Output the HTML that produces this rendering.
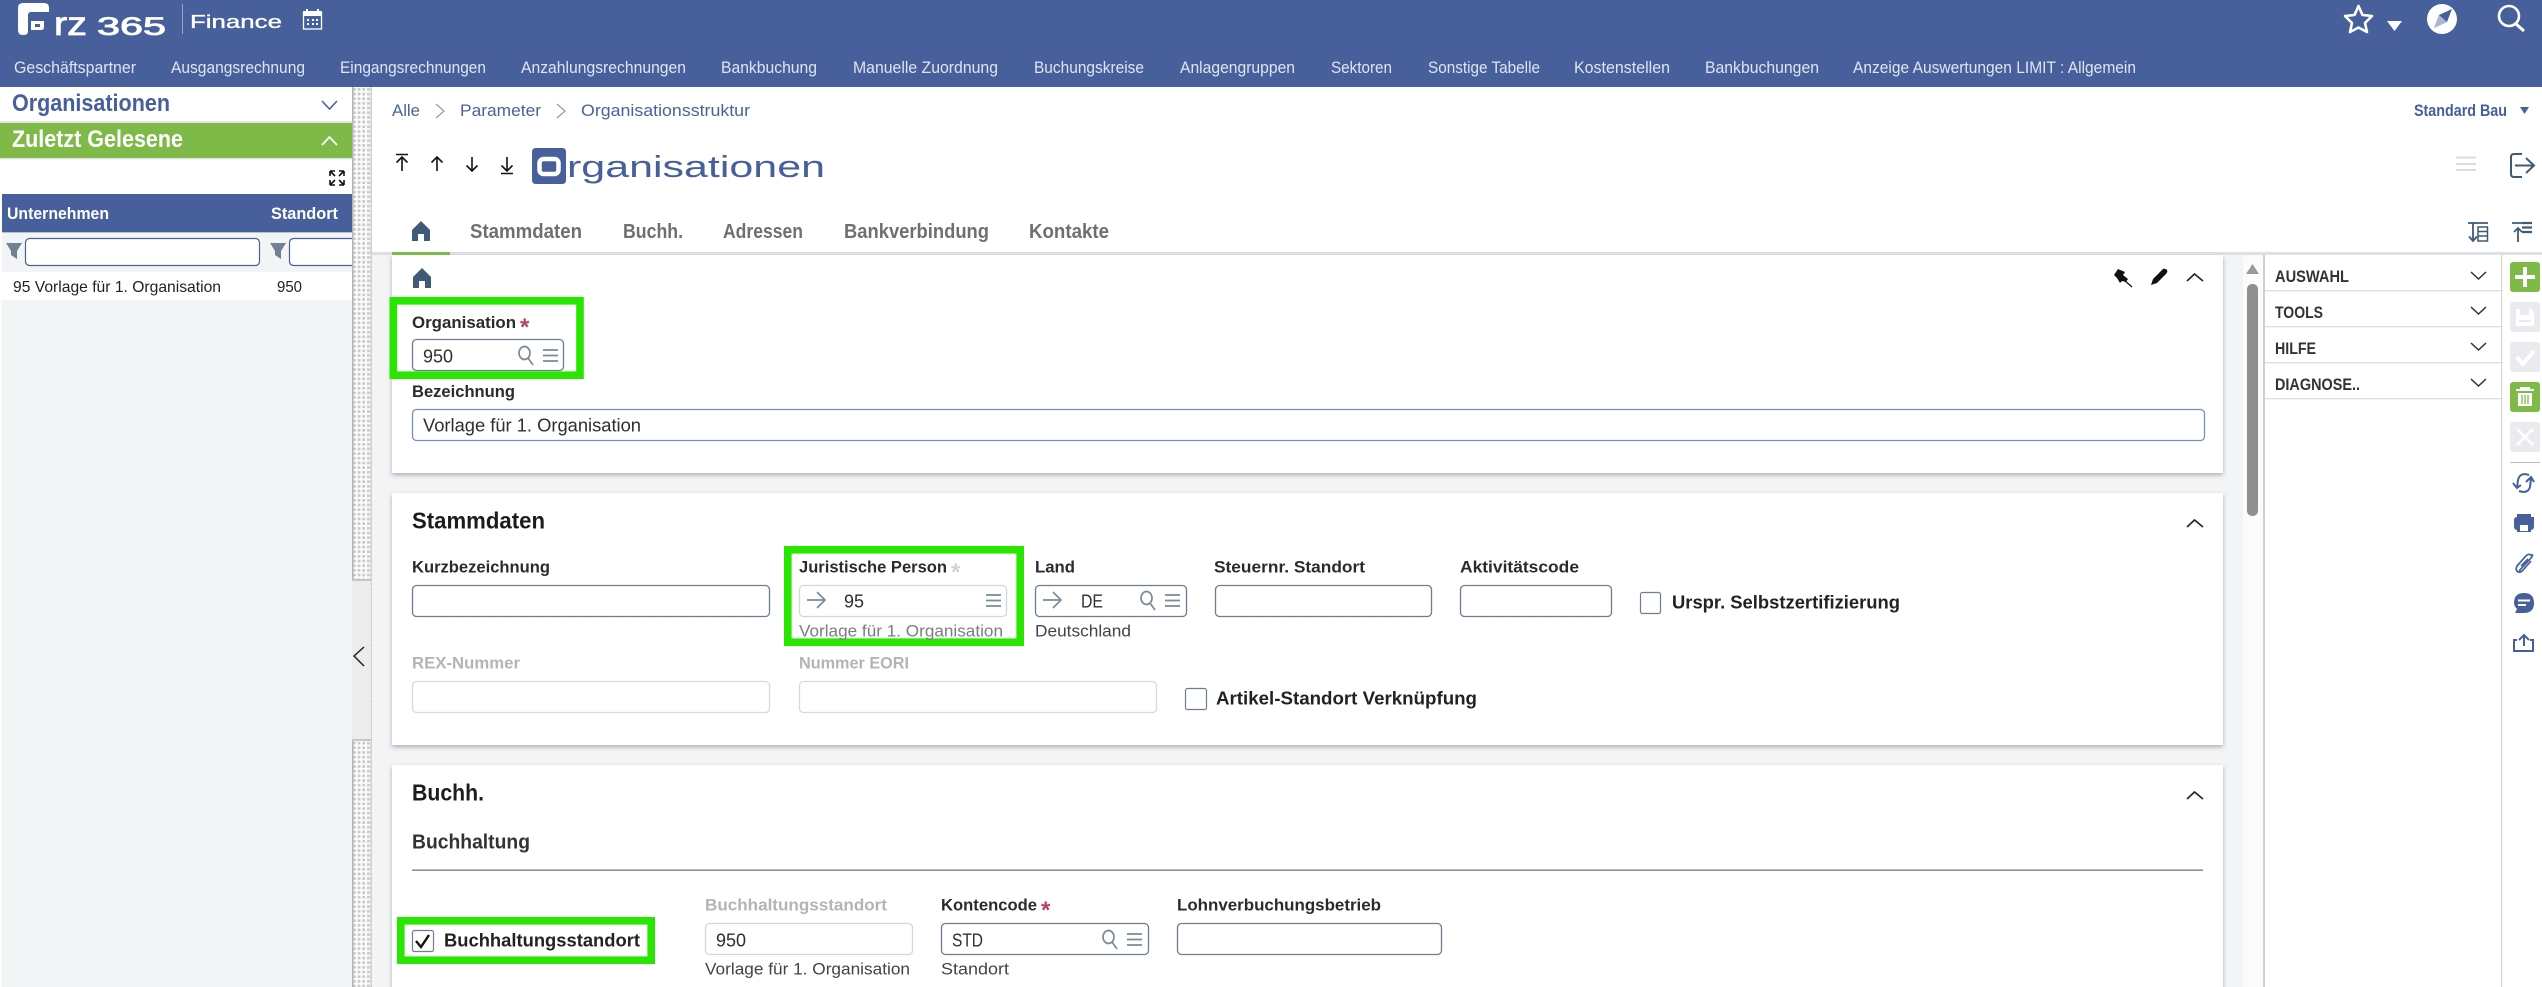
<!DOCTYPE html>
<html lang="de"><head><meta charset="utf-8"><title>Organisationen</title>
<style>
html,body{margin:0;padding:0;background:#fff;width:2542px;height:987px;overflow:hidden}
svg{display:block}
text{font-family:"Liberation Sans",sans-serif;}
.n{font-size:16.5px;fill:#dfe4ef}
.l{font-size:17px;font-weight:700;fill:#2b2b2b}
.g{font-size:17px;font-weight:700;fill:#b4b4b4}
.v{font-size:18px;fill:#2e2e2e}
.s{font-size:17px;fill:#444}
.tab{font-size:20px;font-weight:700;fill:#6f6f6f}
.sb{font-size:16.5px;font-weight:700;fill:#333}
.b{font-size:18.5px;font-weight:700;fill:#222}
.i{fill:#fff;stroke:#6c7f92;stroke-width:1.3}
.d{fill:#fff;stroke:#d6d9dd;stroke-width:1.3}
.ic{fill:none;stroke:#7a8a98;stroke-width:1.6}
</style></head><body>
<svg width="2542" height="987" viewBox="0 0 2542 987" xmlns="http://www.w3.org/2000/svg">
<defs>
<pattern id="dots" x="352" y="87" width="4.67" height="4.67" patternUnits="userSpaceOnUse"><rect width="4.67" height="4.67" fill="#fbfbfb"/><rect x="1" y="1" width="2.7" height="2.7" fill="#c9c9c9"/></pattern>
<filter id="sh" x="-2%" y="-5%" width="104%" height="112%"><feDropShadow dx="0" dy="2" stdDeviation="2.5" flood-color="#6b7680" flood-opacity=".55"/></filter>
<path id="home" d="M9 0 L18 9 V20 H12 V13 H6 V20 H0 V9 Z" fill="#3f5b78"/>
<g id="mag" fill="none" stroke="#7a8a98" stroke-width="1.7"><ellipse cx="6.5" cy="7" rx="5.5" ry="6.500"/><path d="M10 12 L15 19"/></g>
<g id="menu" stroke="#7a8a98" stroke-width="1.7"><path d="M0 1H15M0 6.5H15M0 12H15"/></g>
<g id="arr" fill="none" stroke="#7a8a98" stroke-width="1.7"><path d="M0 9H17M10 1L18 9L10 17"/></g>
<path id="chev" d="M0 0L7.5 7L15 0" fill="none" stroke="#333" stroke-width="1.5"/>
</defs>

<!-- top bar -->
<rect width="2542" height="87" fill="#47609b"/>
<path d="M23 3H44Q49 3 49 8V12H31Q28 12 28 15V31Q28 35 24 35H23Q18 35 18 30V8Q18 3 23 3Z" fill="#fff"/>
<path d="M31 21H44V27Q44 30 41 30H31Z" fill="#fff"/>
<rect x="35" y="24" width="5" height="3" fill="#47609b"/>
<text x="54" y="35" font-size="33" fill="#fff" stroke="#fff" stroke-width=".8" textLength="33" lengthAdjust="spacingAndGlyphs">rz</text>
<text x="97" y="35" font-size="25" fill="#fff" stroke="#fff" stroke-width=".8" textLength="69" lengthAdjust="spacingAndGlyphs">365</text>
<rect x="182" y="4" width="1" height="30" fill="#9aa8c8"/>
<text x="190" y="28" font-size="18.500" fill="#fff" stroke="#fff" stroke-width=".35" textLength="92" lengthAdjust="spacingAndGlyphs">Finance</text>
<g fill="none" stroke="#fff"><rect x="303.500" y="12.500" width="18" height="16.500" stroke-width="1.300"/></g>
<rect x="303" y="11" width="19" height="5" fill="#fff"/>
<path d="M307 9v4M318 9v4" stroke="#fff" stroke-width="2"/>
<path d="M307 20h2M312 20h2M316 20h2M307 24h2M312 24h2M316 24h2" stroke="#fff" stroke-width="2"/>

<g class="n">
<text x="14" y="73" textLength="122" lengthAdjust="spacingAndGlyphs">Geschäftspartner</text>
<text x="171" y="73" textLength="134" lengthAdjust="spacingAndGlyphs">Ausgangsrechnung</text>
<text x="340" y="73" textLength="146" lengthAdjust="spacingAndGlyphs">Eingangsrechnungen</text>
<text x="521" y="73" textLength="165" lengthAdjust="spacingAndGlyphs">Anzahlungsrechnungen</text>
<text x="721" y="73" textLength="96" lengthAdjust="spacingAndGlyphs">Bankbuchung</text>
<text x="853" y="73" textLength="145" lengthAdjust="spacingAndGlyphs">Manuelle Zuordnung</text>
<text x="1034" y="73" textLength="110" lengthAdjust="spacingAndGlyphs">Buchungskreise</text>
<text x="1180" y="73" textLength="115" lengthAdjust="spacingAndGlyphs">Anlagengruppen</text>
<text x="1331" y="73" textLength="61" lengthAdjust="spacingAndGlyphs">Sektoren</text>
<text x="1428" y="73" textLength="112" lengthAdjust="spacingAndGlyphs">Sonstige Tabelle</text>
<text x="1574" y="73" textLength="96" lengthAdjust="spacingAndGlyphs">Kostenstellen</text>
<text x="1705" y="73" textLength="114" lengthAdjust="spacingAndGlyphs">Bankbuchungen</text>
<text x="1853" y="73" textLength="283" lengthAdjust="spacingAndGlyphs">Anzeige Auswertungen LIMIT : Allgemein</text>
</g>

<!-- top right -->
<path d="M2358.500 6L2362.500 15L2372 16L2365 23L2367 32L2358.500 27.500L2350 32L2352 23L2345 16L2354.500 15Z" fill="none" stroke="#fff" stroke-width="2.600" stroke-linejoin="round"/>
<path d="M2387 21H2402L2394.500 31Z" fill="#fff"/>
<circle cx="2442" cy="19" r="15" fill="#fff"/>
<path d="M2452 9L2447 22L2434 28L2439 15Z" fill="#47609b"/><path d="M2439 15L2447 22L2434 28Z" fill="#fff" opacity=".55"/>
<circle cx="2509" cy="16" r="10" fill="none" stroke="#fff" stroke-width="2.600"/><path d="M2516 24L2524 31" stroke="#fff" stroke-width="3"/>

<!-- left panel -->
<rect x="0" y="87" width="352" height="900" fill="#fff"/>
<text x="12" y="111" font-size="24" font-weight="700" fill="#47609b" textLength="158" lengthAdjust="spacingAndGlyphs">Organisationen</text>
<path d="M322 101L329.500 109L337 101" fill="none" stroke="#47609b" stroke-width="1.500"/>
<rect x="0" y="121" width="352" height="2" fill="#e2e4e6"/>
<rect x="0" y="123" width="352" height="35" fill="#7fba48"/>
<text x="12" y="147" font-size="24" font-weight="700" fill="#fff" textLength="171" lengthAdjust="spacingAndGlyphs">Zuletzt Gelesene</text>
<path d="M322 145L329.500 137L337 145" fill="none" stroke="#fff" stroke-width="1.700"/>
<rect x="0" y="158" width="352" height="1.500" fill="#e2e4e6"/>
<g fill="none" stroke="#111" stroke-width="1.600"><path d="M330 171h5M330 171v5M330 171l5 5M344 171h-5M344 171v5M344 171l-5 5M330 185h5M330 185v-5M330 185l5 -5M344 185h-5M344 185v-5M344 185l-5 -5"/></g>
<rect x="2" y="194" width="350" height="38" fill="#47609b"/>
<text x="7" y="219" font-size="16.500" font-weight="700" fill="#fff" textLength="102" lengthAdjust="spacingAndGlyphs">Unternehmen</text>
<text x="271" y="219" font-size="16.500" font-weight="700" fill="#fff" textLength="67" lengthAdjust="spacingAndGlyphs">Standort</text>
<rect x="2" y="232" width="350" height="1.500" fill="#b9c0cc"/>
<rect x="2" y="233" width="350" height="39" fill="#f3f4f6"/>
<path d="M6 243H22L17 251V259L11 255V251Z" fill="#6f8192"/>
<path d="M270 243H286L281 251V259L275 255V251Z" fill="#6f8192"/>
<rect x="25.500" y="238.500" width="234" height="27" rx="4" fill="#fff" stroke="#47609b" stroke-width="1.200"/>
<path d="M352 238.500H294Q289.500 238.500 289.500 243V261Q289.500 265.500 294 265.500H352" fill="#fff" stroke="#47609b" stroke-width="1.200"/>
<text x="13" y="292" font-size="16" fill="#222" textLength="208" lengthAdjust="spacingAndGlyphs">95 Vorlage für 1. Organisation</text>
<text x="277" y="292" font-size="16" fill="#222" textLength="25" lengthAdjust="spacingAndGlyphs">950</text>
<rect x="1" y="300" width="351" height="687" fill="#f3f4f6"/>

<!-- splitter -->
<rect x="352" y="87" width="20" height="900" fill="url(#dots)"/>
<rect x="352" y="87" width="1.500" height="900" fill="#b5b5b5"/>
<rect x="370.500" y="87" width="1" height="900" fill="#bcbcbc"/>
<rect x="352" y="580" width="19" height="160" fill="#ececec"/>
<rect x="352" y="579" width="19" height="2" fill="#c5c5c5"/><rect x="352" y="739" width="19" height="2" fill="#c5c5c5"/>
<path d="M364 647L354 656L364 666" fill="none" stroke="#222" stroke-width="1.500"/>

<!-- breadcrumb -->
<g font-size="17" fill="#4c6399">
<text x="392" y="116" textLength="28" lengthAdjust="spacingAndGlyphs">Alle</text>
<text x="460" y="116" textLength="81" lengthAdjust="spacingAndGlyphs">Parameter</text>
<text x="581" y="116" textLength="169" lengthAdjust="spacingAndGlyphs">Organisationsstruktur</text>
</g>
<path d="M436 104L444 111L436 118M557 104L565 111L557 118" fill="none" stroke="#999" stroke-width="1.200"/>

<!-- arrows -->
<g fill="none" stroke="#111" stroke-width="1.600">
<path d="M396 154.500H408M402 171V157M396.500 162.500L402 157L407.500 162.500"/>
<path d="M437 171V157M431.500 162.500L437 157L442.500 162.500"/>
<path d="M472 157V171M466.500 165.500L472 171L477.500 165.500"/>
<path d="M507 157V171M501.500 165.500L507 171L512.500 165.500M501 173.500H513"/>
</g>

<!-- title logo -->
<rect x="532" y="148" width="34" height="36" rx="3.500" fill="#47609b"/>
<rect x="539.500" y="159" width="19" height="15" rx="4" fill="#47609b" stroke="#fff" stroke-width="4.500"/>
<text x="567" y="177" font-size="31" fill="#47609b" textLength="258" lengthAdjust="spacingAndGlyphs">rganisationen</text>

<!-- tabs -->
<use href="#home" x="412" y="221"/>
<text class="tab" x="470" y="238" textLength="112" lengthAdjust="spacingAndGlyphs">Stammdaten</text>
<text class="tab" x="623" y="238" textLength="60" lengthAdjust="spacingAndGlyphs">Buchh.</text>
<text class="tab" x="723" y="238" textLength="80" lengthAdjust="spacingAndGlyphs">Adressen</text>
<text class="tab" x="844" y="238" textLength="145" lengthAdjust="spacingAndGlyphs">Bankverbindung</text>
<text class="tab" x="1029" y="238" textLength="80" lengthAdjust="spacingAndGlyphs">Kontakte</text>

<!-- page right top -->
<text x="2414" y="116" font-size="16.500" font-weight="700" fill="#47609b" textLength="93" lengthAdjust="spacingAndGlyphs">Standard Bau</text>
<path d="M2520 107H2529L2524.500 114Z" fill="#47609b"/>
<path d="M2456 157.500H2476M2456 164H2476M2456 170H2476" stroke="#dcdcdc" stroke-width="2"/>
<g fill="none" stroke="#3f5b78" stroke-width="2"><path d="M2522 154H2514Q2511 154 2511 157V174Q2511 177 2514 177H2522M2515 165.500H2534M2526 158L2534 165.500L2526 173"/></g>
<g fill="none" stroke="#3f5b78" stroke-width="1.800">
<path d="M2468 223H2488M2473 223V241M2469 236.500L2473 241L2477 236.500"/>
<rect x="2478" y="227" width="9.500" height="14" stroke-width="1.500"/><path d="M2478 231.500H2488M2478 236H2488" stroke-width="1.500"/>
<path d="M2512 223H2524M2518 242V228M2514 232L2518 228L2522 232"/>
<path d="M2522 223H2532M2522 227.500H2532M2522 232H2532" stroke-width="2.200"/>
</g>

<!-- content background -->
<rect x="372" y="252" width="2170" height="3" fill="#dde1e6"/>
<rect x="392" y="252" width="58" height="3" fill="#7fba48"/>
<rect x="372" y="255" width="1891" height="732" fill="#f3f4f6"/>

<!-- cards -->
<rect x="392" y="255" width="1831" height="218" fill="#fff" filter="url(#sh)"/>
<rect x="392" y="493" width="1831" height="252" fill="#fff" filter="url(#sh)"/>
<rect x="392" y="765" width="1831" height="240" fill="#fff" filter="url(#sh)"/>

<!-- scrollbar -->
<rect x="2243" y="255" width="20" height="732" fill="#fbfbfb"/>
<path d="M2246 274H2259L2252.500 264Z" fill="#9a9a9a"/>
<rect x="2247" y="284" width="11" height="232" rx="5" fill="#8f8f8f"/>
<rect x="2263" y="255" width="2" height="732" fill="#cfcfcf"/>

<!-- sidebar -->
<rect x="2265" y="255" width="277" height="732" fill="#fff"/>
<rect x="2501" y="255" width="1.300" height="732" fill="#d9d9d9"/>
<g fill="#ddd"><rect x="2265" y="290" width="236" height="1.300"/><rect x="2265" y="326" width="236" height="1.300"/><rect x="2265" y="362" width="236" height="1.300"/><rect x="2265" y="398" width="236" height="1.300"/></g>
<text class="sb" x="2275" y="282" textLength="74" lengthAdjust="spacingAndGlyphs">AUSWAHL</text>
<text class="sb" x="2275" y="318" textLength="48" lengthAdjust="spacingAndGlyphs">TOOLS</text>
<text class="sb" x="2275" y="354" textLength="41" lengthAdjust="spacingAndGlyphs">HILFE</text>
<text class="sb" x="2275" y="390" textLength="85" lengthAdjust="spacingAndGlyphs">DIAGNOSE..</text>
<use href="#chev" x="2471" y="272"/><use href="#chev" x="2471" y="307"/><use href="#chev" x="2471" y="343"/><use href="#chev" x="2471" y="379"/>

<!-- action buttons -->
<rect x="2510" y="262" width="30" height="30" rx="3" fill="#7fba48"/><path d="M2525 267V287M2515 277H2535" stroke="#fff" stroke-width="4"/>
<rect x="2510" y="302" width="30" height="30" rx="3" fill="#e9ebee"/><path d="M2516 309H2531L2534 312V326H2516Z" fill="#fff"/><rect x="2520" y="309" width="9" height="6" fill="#e9ebee"/><rect x="2519" y="320" width="12" height="2" fill="#e9ebee"/>
<rect x="2510" y="342" width="30" height="30" rx="3" fill="#e9ebee"/><path d="M2517 357L2523 364L2534 351" fill="none" stroke="#fff" stroke-width="4"/>
<rect x="2510" y="382" width="30" height="30" rx="3" fill="#7fba48"/><path d="M2516 390H2534M2521 390V388H2529V390" fill="none" stroke="#fff" stroke-width="2"/><path d="M2518 393H2532V406H2518Z" fill="#fff"/><path d="M2522 395V404M2525 395V404M2528 395V404" stroke="#7fba48" stroke-width="1.300"/>
<rect x="2510" y="422" width="30" height="30" rx="3" fill="#e9ebee"/><path d="M2517 429L2533 445M2533 429L2517 445" stroke="#fff" stroke-width="2.500"/>
<rect x="2510" y="462" width="30" height="1" fill="#bbb"/>
<g fill="none" stroke="#47609b" stroke-width="2">
<path d="M2529 475Q2520 472 2518 480L2517 488M2513 483L2517 488L2521 485"/>
<path d="M2519 491Q2528 494 2530 487L2531 478M2526 482L2531 477L2534 482"/>
</g>
<path d="M2517 517V514H2531V517H2534Q2534 514 2534 526Q2534 530 2531 530V532H2517V530Q2514 530 2514 526V520Q2514 517 2517 517Z" fill="#47609b"/><rect x="2520" y="525" width="8" height="6" fill="#fff"/>
<g fill="none" stroke="#47609b" stroke-width="1.700"><path d="M2519 571L2531 558Q2534 554 2531 555Q2528 553 2525 557L2517 566Q2515 570 2518 572Q2521 573 2524 569L2531 561M2521 566L2528 559"/></g>
<path d="M2524 593Q2534 593 2534 603Q2534 613 2524 613H2515L2517 609Q2514 606 2514 603Q2514 593 2524 593Z" fill="#47609b"/><path d="M2518 600.500H2530M2518 605H2526" stroke="#fff" stroke-width="2"/>
<g fill="none" stroke="#47609b" stroke-width="2"><path d="M2517 640H2514V651H2533V640H2530M2524 646V635M2519 640L2524 635L2529 640"/></g>

<!-- card 1 -->
<use href="#home" x="413" y="268"/>
<rect x="393.300" y="300.800" width="186.700" height="74.400" fill="#fff" stroke="#28e600" stroke-width="7.600"/>
<text class="l" x="412" y="328" textLength="104" lengthAdjust="spacingAndGlyphs">Organisation</text>
<text x="520" y="335" font-size="24" font-weight="700" fill="#b5445a">*</text>
<rect class="i" x="412.500" y="339.500" width="151" height="31" rx="4"/>
<text class="v" x="423" y="362.500" textLength="30" lengthAdjust="spacingAndGlyphs">950</text>
<use href="#mag" x="518" y="346"/><use href="#menu" x="543" y="349"/>
<text class="l" x="412" y="397" textLength="103" lengthAdjust="spacingAndGlyphs">Bezeichnung</text>
<rect x="412.500" y="409.500" width="1792" height="31" rx="4" fill="#fff" stroke="#7b90b8" stroke-width="1.300"/>
<text class="v" x="423" y="431.500" textLength="218" lengthAdjust="spacingAndGlyphs">Vorlage für 1. Organisation</text>
<!-- pin / pencil / chevron -->
<path d="M2118 269L2125 272L2123 275L2128 279L2126 282L2122 281L2120 283L2117 278L2114 275Z" fill="#111"/><path d="M2124 280L2132 287" stroke="#111" stroke-width="1.300"/>
<path d="M2151 285L2153 279L2163 269Q2165 268 2167 270Q2168 272 2166 274L2157 283Z" fill="#111"/>
<path d="M2187 281L2194.500 274L2203 281" fill="none" stroke="#222" stroke-width="1.600"/>

<!-- card 2 -->
<text x="412" y="528.500" font-size="23.500" font-weight="700" fill="#1c1c1c" textLength="133" lengthAdjust="spacingAndGlyphs">Stammdaten</text>
<path d="M2187 527L2194.500 520L2203 527" fill="none" stroke="#222" stroke-width="1.600"/>
<text class="l" x="412" y="572.500" textLength="138" lengthAdjust="spacingAndGlyphs">Kurzbezeichnung</text>
<rect class="i" x="412.500" y="585.500" width="357" height="31" rx="4"/>
<rect x="787.800" y="549.800" width="232.400" height="92.400" fill="#fff" stroke="#28e600" stroke-width="7.600"/>
<text class="l" x="799" y="572.500" textLength="148" lengthAdjust="spacingAndGlyphs">Juristische Person</text>
<text x="951" y="580" font-size="24" font-weight="700" fill="#d2d2d2">*</text>
<rect x="799.500" y="585.500" width="207" height="31" rx="4" fill="#fff" stroke="#d3d6da" stroke-width="1.300"/>
<use href="#arr" x="807" y="591"/>
<text class="v" x="844" y="607.500" textLength="20" lengthAdjust="spacingAndGlyphs">95</text>
<use href="#menu" x="986" y="594"/>
<text x="799" y="636.500" font-size="17" fill="#7d7d7d" textLength="204" lengthAdjust="spacingAndGlyphs">Vorlage für 1. Organisation</text>
<text class="l" x="1035" y="572.500" textLength="40" lengthAdjust="spacingAndGlyphs">Land</text>
<rect class="i" x="1035.500" y="585.500" width="151" height="31" rx="4"/>
<use href="#arr" x="1043" y="591"/>
<text class="v" x="1081" y="607.500" textLength="22" lengthAdjust="spacingAndGlyphs">DE</text>
<use href="#mag" x="1140" y="591"/><use href="#menu" x="1165" y="594"/>
<text class="s" x="1035" y="636.500" textLength="96" lengthAdjust="spacingAndGlyphs">Deutschland</text>
<text class="l" x="1214" y="572.500" textLength="151" lengthAdjust="spacingAndGlyphs">Steuernr. Standort</text>
<rect class="i" x="1215.500" y="585.500" width="216" height="31" rx="4"/>
<text class="l" x="1460" y="572.500" textLength="119" lengthAdjust="spacingAndGlyphs">Aktivitätscode</text>
<rect class="i" x="1460.500" y="585.500" width="151" height="31" rx="4"/>
<rect x="1640.500" y="592.500" width="20" height="21" rx="2" fill="#fff" stroke="#6c7f92" stroke-width="1.200"/>
<text class="b" x="1672" y="608.500" textLength="228" lengthAdjust="spacingAndGlyphs">Urspr. Selbstzertifizierung</text>
<text class="g" x="412" y="668.500" textLength="108" lengthAdjust="spacingAndGlyphs">REX-Nummer</text>
<rect class="d" x="412.500" y="681.500" width="357" height="31" rx="4"/>
<text class="g" x="799" y="668.500" textLength="110" lengthAdjust="spacingAndGlyphs">Nummer EORI</text>
<rect class="d" x="799.500" y="681.500" width="357" height="31" rx="4"/>
<rect x="1185.500" y="688.500" width="21" height="21" rx="2" fill="#fff" stroke="#6c7f92" stroke-width="1.200"/>
<text class="b" x="1216" y="704.500" textLength="261" lengthAdjust="spacingAndGlyphs">Artikel-Standort Verknüpfung</text>

<!-- card 3 -->
<text x="412" y="800.500" font-size="23.500" font-weight="700" fill="#1c1c1c" textLength="72" lengthAdjust="spacingAndGlyphs">Buchh.</text>
<path d="M2187 799L2194.500 792L2203 799" fill="none" stroke="#222" stroke-width="1.600"/>
<text x="412" y="848.500" font-size="20" font-weight="700" fill="#333" textLength="118" lengthAdjust="spacingAndGlyphs">Buchhaltung</text>
<rect x="412" y="869.500" width="1791" height="1.300" fill="#777"/>
<rect x="400.800" y="920.800" width="250.400" height="39.400" fill="#fff" stroke="#28e600" stroke-width="7.600"/>
<rect x="412.500" y="930.500" width="21" height="21" rx="2" fill="#fff" stroke="#6c7f92" stroke-width="1.200"/>
<path d="M416 941L421 947L429 935" fill="none" stroke="#111" stroke-width="2.400"/>
<text class="b" x="444" y="946.500" textLength="196" lengthAdjust="spacingAndGlyphs">Buchhaltungsstandort</text>
<text class="g" x="705" y="910.500" textLength="182" lengthAdjust="spacingAndGlyphs">Buchhaltungsstandort</text>
<rect x="705.500" y="923.500" width="207" height="31" rx="4" fill="#fff" stroke="#d3d6da" stroke-width="1.300"/>
<text class="v" x="716" y="946.500" textLength="30" lengthAdjust="spacingAndGlyphs">950</text>
<text class="s" x="705" y="974.500" textLength="205" lengthAdjust="spacingAndGlyphs">Vorlage für 1. Organisation</text>
<text class="l" x="941" y="910.500" textLength="96" lengthAdjust="spacingAndGlyphs">Kontencode</text>
<text x="1041" y="918" font-size="24" font-weight="700" fill="#b5445a">*</text>
<rect class="i" x="941.500" y="923.500" width="207" height="31" rx="4"/>
<text class="v" x="952" y="946.500" textLength="31" lengthAdjust="spacingAndGlyphs">STD</text>
<use href="#mag" x="1102" y="930"/><use href="#menu" x="1127" y="933"/>
<text class="s" x="941" y="974.500" textLength="68" lengthAdjust="spacingAndGlyphs">Standort</text>
<text class="l" x="1177" y="910.500" textLength="204" lengthAdjust="spacingAndGlyphs">Lohnverbuchungsbetrieb</text>
<rect class="i" x="1177.500" y="923.500" width="264" height="31" rx="4"/>
</svg>
</body></html>
